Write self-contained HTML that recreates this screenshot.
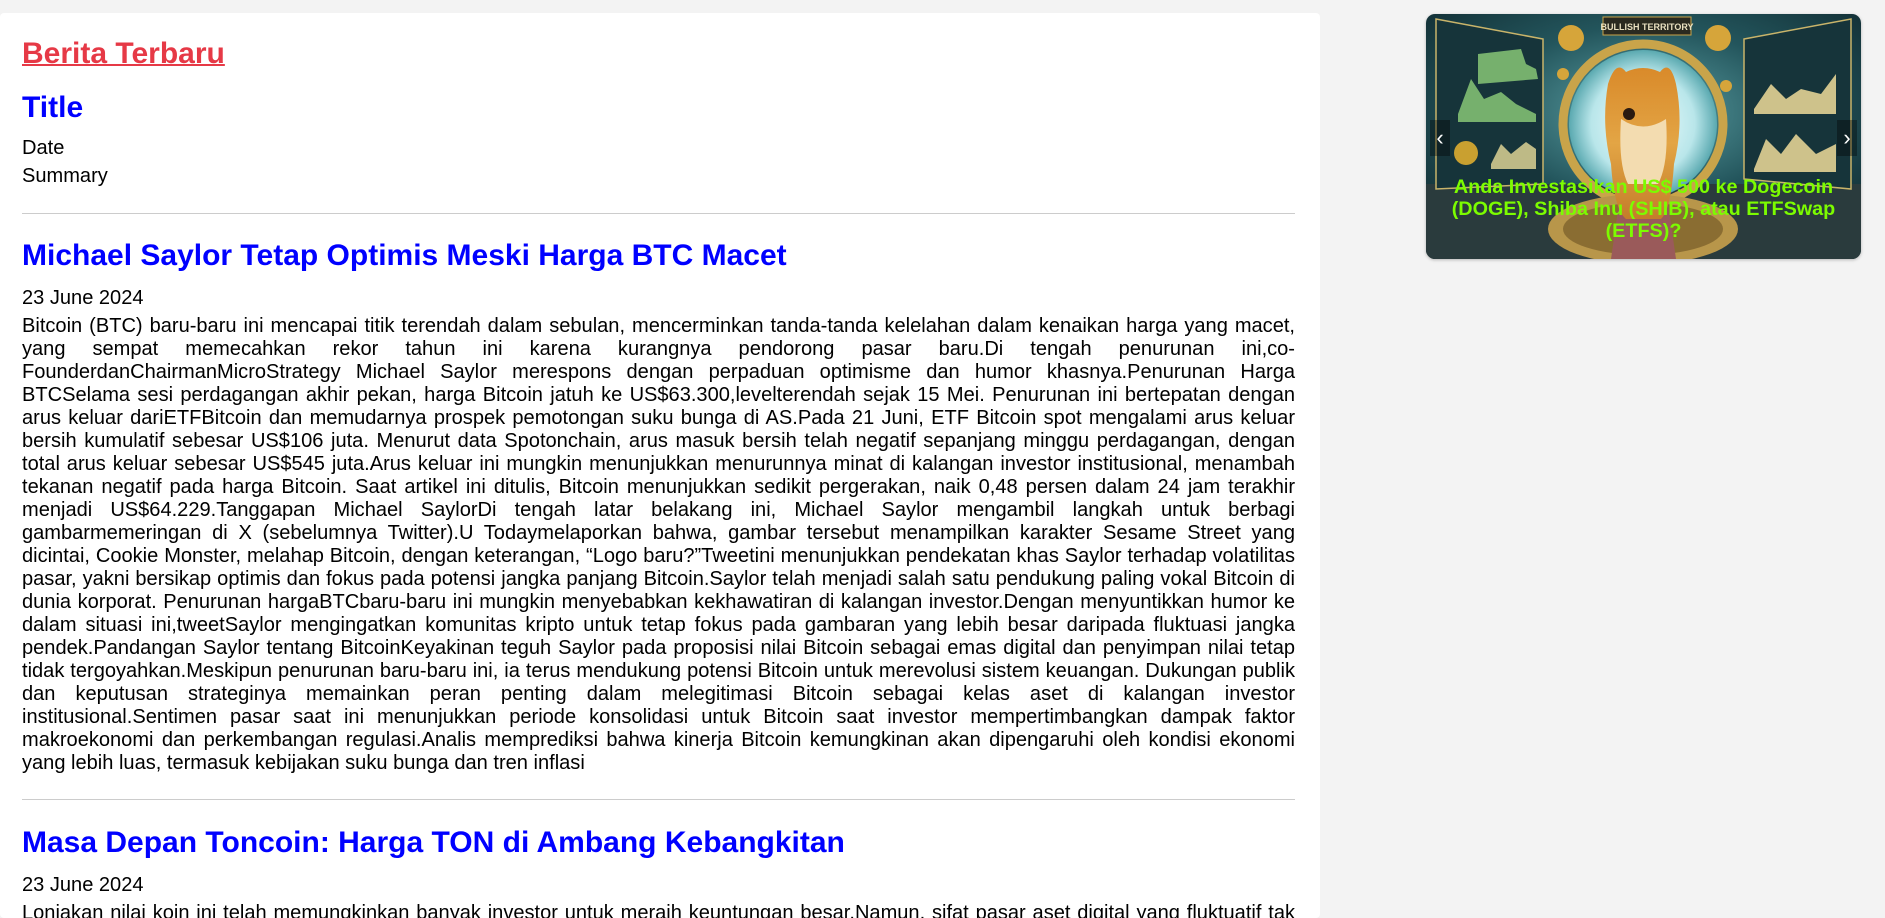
<!DOCTYPE html>
<html><head><meta charset="utf-8"><style>
html,body{margin:0;padding:0;}
body{width:1885px;height:918px;overflow:hidden;background:#f3f3f3;font-family:"Liberation Sans",Arial,sans-serif;position:relative;}
.card{position:absolute;left:0;top:13px;width:1320px;height:905px;background:#fff;border-radius:4px;overflow:hidden;}
.a{position:absolute;left:22px;width:1273px;margin:0;}
.h{font-size:30px;font-weight:bold;line-height:normal;color:#0000ff;}
.t{font-size:20.06px;line-height:23px;color:#000;}
.j{text-align:justify;}
hr.l{position:absolute;left:22px;width:1273px;margin:0;border:0;border-top:1.5px solid #ccc;}
.car{position:absolute;left:1426px;top:14px;width:435px;height:245px;border-radius:9px;overflow:hidden;box-shadow:0 1px 3px rgba(0,0,0,.25);}
.cap{position:absolute;left:10px;right:10px;top:162px;text-align:center;color:#7cfc00;font-weight:bold;font-size:19.8px;line-height:22px;}
.arr{position:absolute;top:106px;width:20px;height:36px;background:rgba(0,0,0,.35);color:#fff;font-size:22px;line-height:36px;text-align:center;}
</style></head><body>
<div class="card">
<div class="a h" style="top:24px;color:#e63946;text-decoration:underline;text-decoration-thickness:2px;">Berita Terbaru</div>
<div class="a h" style="top:78px;">Title</div>
<div class="a t" style="top:124px;">Date</div>
<div class="a t" style="top:152px;">Summary</div>
<hr class="l" style="top:200px;">
<div class="a h" style="top:226px;">Michael Saylor Tetap Optimis Meski Harga BTC Macet</div>
<div class="a t" style="top:274px;">23 June 2024</div>
<div class="a t j" style="top:302px;text-align-last:justify;">Bitcoin (BTC) baru-baru ini mencapai titik terendah dalam sebulan, mencerminkan tanda-tanda kelelahan dalam kenaikan harga yang macet, yang sempat memecahkan rekor tahun ini karena kurangnya pendorong pasar baru.Di tengah penurunan ini,co-FounderdanChairmanMicroStrategy Michael Saylor merespons dengan perpaduan optimisme dan humor khasnya.Penurunan Harga BTCSelama sesi perdagangan akhir pekan, harga Bitcoin jatuh ke US$63.300,levelterendah sejak 15 Mei. Penurunan ini bertepatan dengan arus keluar dariETFBitcoin dan memudarnya prospek pemotongan suku bunga di AS.Pada 21 Juni, ETF Bitcoin spot mengalami arus keluar bersih kumulatif sebesar US$106 juta. Menurut data Spotonchain, arus masuk bersih telah negatif sepanjang minggu perdagangan, dengan total arus keluar sebesar US$545 juta.Arus keluar ini mungkin menunjukkan menurunnya minat di kalangan investor institusional, menambah tekanan negatif pada harga Bitcoin. Saat artikel ini ditulis, Bitcoin menunjukkan sedikit pergerakan, naik 0,48 persen dalam 24 jam terakhir menjadi US$64.229.Tanggapan Michael SaylorDi tengah latar belakang ini, Michael Saylor mengambil langkah untuk berbagi gambarmemeringan di X (sebelumnya Twitter).U Todaymelaporkan bahwa, gambar tersebut menampilkan karakter Sesame Street yang dicintai, Cookie Monster, melahap Bitcoin, dengan keterangan, “Logo baru?”Tweetini menunjukkan pendekatan khas Saylor terhadap volatilitas pasar, yakni bersikap optimis dan fokus pada potensi jangka panjang Bitcoin.Saylor telah menjadi salah satu pendukung paling vokal Bitcoin di dunia korporat. Penurunan hargaBTCbaru-baru ini mungkin menyebabkan kekhawatiran di kalangan investor.Dengan menyuntikkan humor ke dalam situasi ini,tweetSaylor mengingatkan komunitas kripto untuk tetap fokus pada gambaran yang lebih besar daripada fluktuasi jangka pendek.Pandangan Saylor tentang BitcoinKeyakinan teguh Saylor pada proposisi nilai Bitcoin sebagai emas digital dan penyimpan nilai tetap tidak tergoyahkan.Meskipun penurunan baru-baru ini, ia terus mendukung potensi Bitcoin untuk merevolusi sistem keuangan. Dukungan publik dan keputusan strateginya memainkan peran penting dalam melegitimasi Bitcoin sebagai kelas aset di kalangan investor</div>
<div class="a t j" style="top:693px;">institusional.Sentimen pasar saat ini menunjukkan periode konsolidasi untuk Bitcoin saat investor mempertimbangkan dampak faktor makroekonomi dan perkembangan regulasi.Analis memprediksi bahwa kinerja Bitcoin kemungkinan akan dipengaruhi oleh kondisi ekonomi yang lebih luas, termasuk kebijakan suku bunga dan tren inflasi</div>
<hr class="l" style="top:786px;">
<div class="a h" style="top:813px;">Masa Depan Toncoin: Harga TON di Ambang Kebangkitan</div>
<div class="a t" style="top:861px;">23 June 2024</div>
<div class="a t j" style="top:889px;">Lonjakan nilai koin ini telah memungkinkan banyak investor untuk meraih keuntungan besar.Namun, sifat pasar aset digital yang fluktuatif tak dapat diabaikan, dan para investor perlu berhati-hati dalam mengambil keputusan investasi mereka di tengah kondisi pasar saat ini.</div>
</div>

<div class="car">
<svg width="435" height="245" viewBox="0 0 435 245" xmlns="http://www.w3.org/2000/svg">
<defs>
<radialGradient id="bg" cx="50%" cy="40%" r="70%"><stop offset="0" stop-color="#5fa4a8"/><stop offset="0.5" stop-color="#23555c"/><stop offset="1" stop-color="#102a30"/></radialGradient>
<radialGradient id="ci" cx="50%" cy="50%" r="50%"><stop offset="0" stop-color="#f2ffff"/><stop offset="0.7" stop-color="#b9e6ea"/><stop offset="1" stop-color="#5aa9b0"/></radialGradient>
<linearGradient id="dg" x1="0" y1="0" x2="0" y2="1"><stop offset="0" stop-color="#d98a2a"/><stop offset="0.5" stop-color="#e3a545"/><stop offset="1" stop-color="#c47d2a"/></linearGradient>
</defs>
<rect width="435" height="245" fill="url(#bg)"/>
<rect x="0" y="170" width="435" height="75" fill="#2a3b3d"/>
<g fill="#16343a" stroke="#c9b46a" stroke-width="1.5">
<path d="M10 5 L117 25 L117 170 L10 175 Z"/>
<path d="M318 25 L425 5 L425 175 L318 165 Z"/>
</g>
<path d="M52 40 L95 35 L100 50 L110 55 L112 65 L52 70 Z" fill="#8fd07a" opacity=".8"/>
<path d="M32 100 L45 65 L58 85 L75 78 L90 90 L110 100 L110 108 L32 108 Z" fill="#8fd07a" opacity=".8"/>
<path d="M65 150 L75 130 L85 140 L100 128 L110 135 L110 155 L65 155 Z" fill="#e8dc9a" opacity=".8"/>
<path d="M328 95 L345 70 L360 85 L375 75 L395 80 L410 60 L410 100 L328 100 Z" fill="#eedc9a" opacity=".85"/>
<path d="M328 155 L340 125 L355 140 L370 120 L390 140 L410 130 L410 158 L328 158 Z" fill="#eedc9a" opacity=".85"/>
<circle cx="217" cy="110" r="80" fill="none" stroke="#c9a44a" stroke-width="9"/>
<circle cx="217" cy="110" r="74" fill="url(#ci)"/>
<ellipse cx="217" cy="215" rx="95" ry="35" fill="#b8964a"/>
<ellipse cx="217" cy="215" rx="80" ry="26" fill="#8a6d32"/>
<path d="M185 245 L195 175 L240 175 L250 245 Z" fill="#9a5a5a"/>
<path d="M182 70 Q190 45 200 58 Q217 50 234 58 Q244 45 250 70 Q258 110 248 150 Q245 195 235 205 L200 205 Q188 195 185 150 Q175 110 182 70 Z" fill="url(#dg)"/>
<path d="M195 105 Q217 120 240 105 Q243 150 232 170 L202 170 Q192 150 195 105 Z" fill="#f3dcb0"/>
<circle cx="203" cy="100" r="6" fill="#2b1a10"/>
<rect x="177" y="3" width="88" height="18" fill="#2a2a20" stroke="#c9a44a"/>
<text x="221" y="16" font-family="Liberation Sans,sans-serif" font-size="9" font-weight="bold" fill="#e8e0c0" text-anchor="middle">BULLISH TERRITORY</text>
<circle cx="145" cy="24" r="13" fill="#d6a53a"/><circle cx="292" cy="24" r="13" fill="#d6a53a"/>
<circle cx="137" cy="60" r="6" fill="#d6a53a"/><circle cx="300" cy="72" r="6" fill="#d6a53a"/>
<circle cx="40" cy="139" r="12" fill="#c9a030"/>
</svg>
<div class="arr" style="left:4px;">&#8249;</div>
<div class="arr" style="right:4px;">&#8250;</div>
<div class="cap">Anda Investasikan US$ 500 ke Dogecoin (DOGE), Shiba Inu (SHIB), atau ETFSwap (ETFS)?</div>
</div>
</body></html>
